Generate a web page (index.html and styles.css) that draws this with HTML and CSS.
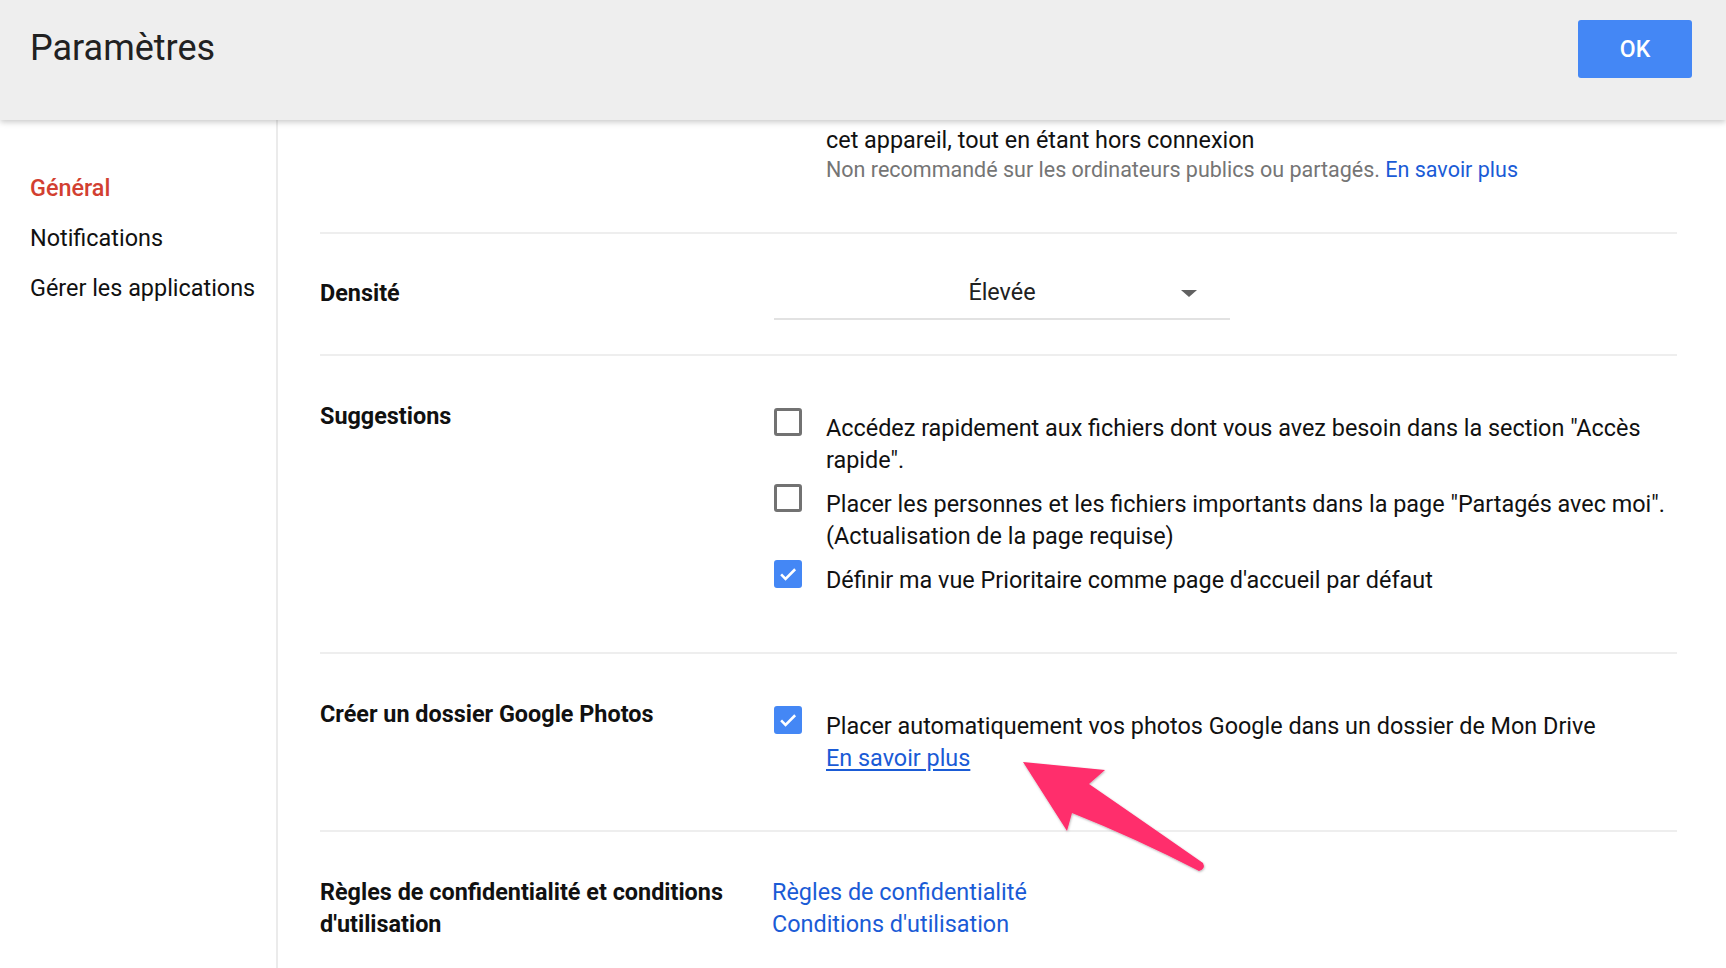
FILE: index.html
```html
<!DOCTYPE html>
<html lang="fr">
<head>
<meta charset="utf-8">
<title>Paramètres</title>
<link rel="stylesheet" href="styles.css">
</head>
<body>
<header class="header">
  <h1 class="title">Paramètres</h1>
  <button class="ok-btn">OK</button>
</header>
<div class="layout">
  <nav class="sidebar">
    <div class="nav-item nav-active">Général</div>
    <div class="nav-item">Notifications</div>
    <div class="nav-item">Gérer les applications</div>
  </nav>
  <main class="main">
    <section class="section section-top">
      <div class="label"></div>
      <div class="control">
        <div class="indent">
          <div class="text-line">cet appareil, tout en étant hors connexion</div>
          <div class="hint">Non recommandé sur les ordinateurs publics ou partagés. <a class="link" href="#">En savoir plus</a></div>
        </div>
      </div>
    </section>
    <section class="section section-density">
      <div class="label">Densité</div>
      <div class="control">
        <div class="dropdown">
          <span class="dropdown-value">Élevée</span>
          <span class="dropdown-arrow"></span>
        </div>
      </div>
    </section>
    <section class="section">
      <div class="label">Suggestions</div>
      <div class="control control-checks">
        <div class="check-item">
          <span class="checkbox"></span>
          <span class="check-text">Accédez rapidement aux fichiers dont vous avez besoin dans la section "Accès rapide".</span>
        </div>
        <div class="check-item">
          <span class="checkbox"></span>
          <span class="check-text">Placer les personnes et les fichiers importants dans la page "Partagés avec moi". (Actualisation de la page requise)</span>
        </div>
        <div class="check-item">
          <span class="checkbox checked"><svg viewBox="0 0 24 24" width="26" height="26"><path d="M4.5 12.5l4.8 4.8L19.8 6.8" fill="none" stroke="#fff" stroke-width="2.8"/></svg></span>
          <span class="check-text">Définir ma vue Prioritaire comme page d'accueil par défaut</span>
        </div>
      </div>
    </section>
    <section class="section">
      <div class="label">Créer un dossier Google Photos</div>
      <div class="control control-checks">
        <div class="check-item">
          <span class="checkbox checked"><svg viewBox="0 0 24 24" width="26" height="26"><path d="M4.5 12.5l4.8 4.8L19.8 6.8" fill="none" stroke="#fff" stroke-width="2.8"/></svg></span>
          <span class="check-text">Placer automatiquement vos photos Google dans un dossier de Mon Drive<br><a class="link link-underline" href="#">En savoir plus</a></span>
        </div>
      </div>
    </section>
    <section class="section section-last">
      <div class="label">Règles de confidentialité et conditions d'utilisation</div>
      <div class="control">
        <a class="link block-link" href="#">Règles de confidentialité</a>
        <a class="link block-link" href="#">Conditions d'utilisation</a>
      </div>
    </section>
  </main>
</div>
<svg class="arrow" width="220" height="150" viewBox="0 0 220 150">
  <defs>
    <filter id="sh" x="-10%" y="-10%" width="130%" height="130%">
      <feDropShadow dx="0.5" dy="1" stdDeviation="0.8" flood-color="#000" flood-opacity="0.3"/>
    </filter>
  </defs>
  <path d="M23 24 L105 32 L89 46 Q150 88 203 125 Q206 131 199 133 Q135 100 72 75 L67 93 Z" fill="#ff2d6c" filter="url(#sh)"/>
</svg>
</body>
</html>
```
FILE: styles.css
```css
* { box-sizing: border-box; }
html, body { margin: 0; padding: 0; }
body {
  font-family: Roboto, "Noto Sans", "Liberation Sans", sans-serif;
  color: #111;
  background: #fff;
  width: 1726px;
  height: 968px;
  overflow: hidden;
  position: relative;
}
.header {
  height: 120px;
  background: #eeeeee;
  display: flex;
  align-items: flex-start;
  justify-content: space-between;
  padding: 20px 34px 0 30px;
  box-shadow: 0 2px 6px rgba(0,0,0,0.22);
  position: relative;
  z-index: 2;
}
.title {
  margin: 0;
  font-weight: 400;
  font-size: 36px;
  line-height: 56px;
  color: #212121;
}
.ok-btn {
  width: 114px;
  height: 58px;
  border: none;
  border-radius: 3px;
  background: #4487f5;
  color: #fff;
  font-family: inherit;
  font-weight: 500;
  font-size: 23px;
  padding: 0;
}
.layout {
  display: flex;
  height: 848px;
}
.sidebar {
  width: 278px;
  flex: none;
  border-right: 2px solid #ebebeb;
  padding: 43px 0 0 30px;
}
.nav-item {
  font-size: 23.4px;
  line-height: 50px;
  color: #111;
}
.nav-active {
  color: #d23f31;
  font-weight: 500;
}
.main {
  flex: 1;
  padding: 0 49px 0 42px;
}
.section {
  display: grid;
  grid-template-columns: 452px 1fr;
  padding: 44px 0 56px;
  border-bottom: 2px solid #eeeeee;
}
.section-top {
  padding: 4px 0 48px;
}
.section-density {
  padding: 32px 0 34px;
  align-items: center;
}
.section-last {
  border-bottom: none;
}
.label {
  font-weight: 700;
  font-size: 23.4px;
  line-height: 32px;
  padding-right: 30px;
}
.control {
  font-size: 23.4px;
  line-height: 32px;
}
.indent {
  padding-left: 54px;
}
.hint {
  color: #757575;
  font-size: 21.5px;
  line-height: 28px;
}
.link {
  color: #1a5bd6;
  text-decoration: none;
}
.link-underline {
  text-decoration: underline;
  text-underline-offset: 3px;
}
.block-link {
  display: block;
}
.dropdown {
  width: 456px;
  margin-left: 2px;
  height: 54px;
  border-bottom: 2px solid #e2e2e2;
  display: flex;
  align-items: center;
  justify-content: center;
  position: relative;
}
.dropdown-value {
  color: #212121;
}
.dropdown-arrow {
  position: absolute;
  right: 33px;
  top: 24px;
  width: 0;
  height: 0;
  border-left: 8px solid transparent;
  border-right: 8px solid transparent;
  border-top: 7px solid #616161;
}
.control-checks {
  padding-top: 8px;
  display: flex;
  flex-direction: column;
  gap: 8px;
}
.check-item {
  display: flex;
  align-items: flex-start;
}
.checkbox {
  flex: none;
  width: 28px;
  height: 28px;
  margin-left: 2px;
  border: 3px solid #727272;
  border-radius: 3px;
  display: flex;
  align-items: center;
  justify-content: center;
}
.checkbox.checked {
  background: #4487f5;
  border-color: #4487f5;
}
.check-text {
  padding-top: 4px;
  padding-left: 24px;
}
.arrow {
  position: absolute;
  left: 1000px;
  top: 738px;
  z-index: 3;
}
```
